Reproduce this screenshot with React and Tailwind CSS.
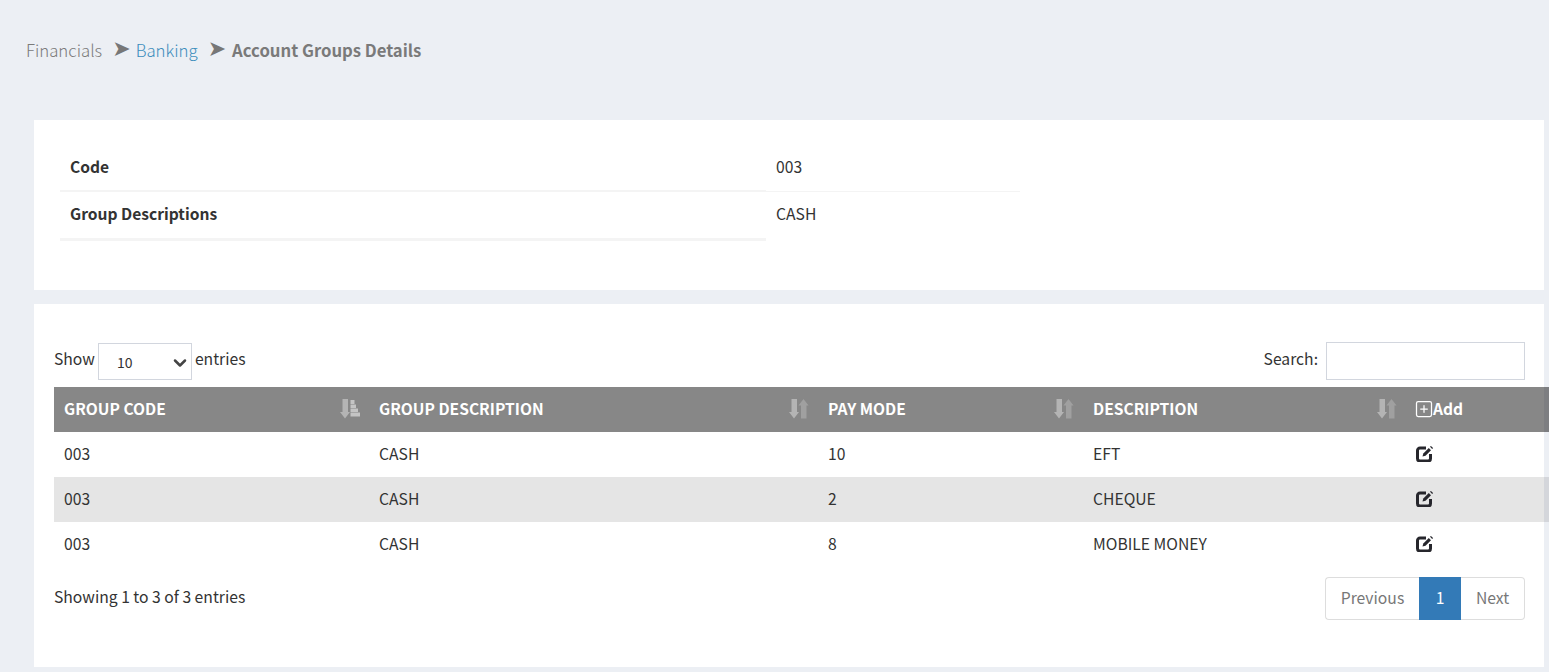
import React from 'react';
import { ChevronDown, SquarePlus } from 'lucide-react';

const rows = [
  { code: '003', desc: 'CASH', mode: '10', name: 'EFT' },
  { code: '003', desc: 'CASH', mode: '2', name: 'CHEQUE' },
  { code: '003', desc: 'CASH', mode: '8', name: 'MOBILE MONEY' },
];

// up/down arrows shown on the sortable headers
function SortIcon({ active }) {
  return (
    <svg width="20" height="20" viewBox="0 0 20 20" className="absolute right-[9px] top-[12px]">
      <path d="M2.500 0h5.500v13h2l-5 6.500-5-6.500h2.500z" fill="#b4b4b4" />
      {active ? (
        <path d="M10.500 1h4v4h-4zM10.500 5.500h5.500v3.500h-5.500zM10.500 9.500h7.500v3.500h-7.500zM10.500 13.500h9.500v4h-9.500z" fill="#c4c4c4" />
      ) : (
        <path d="M12 19.500h5.500v-13h2l-5-6.500-5 6.500h2.500z" fill="#a0a0a0" />
      )}
    </svg>
  );
}

// heavy edit glyph used on every row
function EditIcon() {
  return (
    <svg width="18" height="17" viewBox="0 0 18 17" className="-mt-[3px]">
      <path d="M10 3H4a2.500 2.500 0 0 0-2.500 2.500v8A2.500 2.500 0 0 0 4 16h8a2.500 2.500 0 0 0 2.500-2.500V9" fill="none" stroke="#26262c" strokeWidth="3" />
      <path d="M6.500 11.500l.8-3 5.500-5.500 2.200 2.200-5.500 5.500z" fill="#26262c" />
      <path d="M14 1.800l.9-.9 2.200 2.200-.9.900z" fill="#26262c" />
    </svg>
  );
}

function App() {
  return (
    <div className="h-[672px] overflow-hidden bg-[#eceff4] font-['Noto_Sans_CJK_SC',sans-serif] text-[15.7px] text-[#333333]">
      {/* Breadcrumb */}
      <div className="flex h-[120px] items-start pl-[26px] pt-[37px] text-[16.8px] leading-[26px] text-[#7a7a7a]">
        <span className="font-light">Financials</span>
        <span className="ml-[10px] mr-[5px] -mt-[1px] font-['DejaVu_Sans',sans-serif] text-[22px] text-[#777777]">➤</span>
        <span className="font-light text-[#3c8dbc]">Banking</span>
        <span className="ml-[10px] mr-[6px] -mt-[1px] font-['DejaVu_Sans',sans-serif] text-[22px] text-[#777777]">➤</span>
        <span className="text-[16.7px] font-bold">Account Groups Details</span>
      </div>

      {/* Summary card */}
      <div className="ml-[34px] mr-[5px] h-[170px] bg-white pl-[26px] pt-[24px]">
        <table className="w-[960px] table-fixed border-collapse">
          <tbody>
            <tr className="h-[47px]">
              <td className="w-[706px] border-b-2 border-[#f4f4f4] pl-[10px] text-[15.6px] font-bold">Code</td>
              <td className="border-b border-[#f4f4f4] pl-[10px]">003</td>
            </tr>
            <tr className="h-[48px]">
              <td className="border-b-[3px] border-[#f4f4f4] pb-[2px] pl-[10px] text-[15.6px] font-bold">Group Descriptions</td>
              <td className="pb-[2px] pl-[10px]">CASH</td>
            </tr>
          </tbody>
        </table>
      </div>

      {/* Details card */}
      <div className="ml-[34px] mr-[5px] mt-[14px] h-[363px] bg-white pl-[20px] pt-[38px]">
        <div className="flex h-[45px] items-start justify-between pr-[19px]">
          <div className="flex items-center gap-[3px]">
            <span className="pb-[4px]">Show</span>
            <div className="relative mt-[1px]">
              <select className="block h-[37px] w-[94px] appearance-none rounded-none border border-[#d2d6de] bg-white pl-[18px] pt-[2px] text-[14px] outline-none">
                <option>10</option>
              </select>
              <ChevronDown size={20} strokeWidth={3} className="absolute right-[2px] top-[10px] text-[#444444]" />
            </div>
            <span className="pb-[4px]">entries</span>
          </div>
          <div className="flex items-center gap-[8px]">
            <span className="pb-[4px]">Search:</span>
            <input className="h-[38px] w-[199px] border border-[#d2d6de] bg-white outline-none" />
          </div>
        </div>

        <table className="w-[1500px] table-fixed border-collapse text-left">
          <thead>
            <tr className="h-[45px] bg-black/47 text-[15.6px] font-bold text-white">
              <th className="relative w-[315px] pb-[2px] pl-[10px]">GROUP CODE<SortIcon active /></th>
              <th className="relative w-[449px] pb-[2px] pl-[10px]">GROUP DESCRIPTION<SortIcon /></th>
              <th className="relative w-[265px] pb-[2px] pl-[10px]">PAY MODE<SortIcon /></th>
              <th className="relative w-[323px] pb-[2px] pl-[10px]">DESCRIPTION<SortIcon /></th>
              <th className="pb-[2px] pl-[10px]">
                <span className="flex items-center gap-0">
                  <SquarePlus size={20} strokeWidth={1.5} className="-ml-[2px] mr-[-1px] mt-[1px]" />
                  Add
                </span>
              </th>
            </tr>
          </thead>
          <tbody>
            {rows.map((row, i) => (
              <tr key={row.name} className={i === 1 ? 'h-[45px] bg-black/10' : 'h-[45px]'}>
                <td className="pb-[2px] pl-[10px]">{row.code}</td>
                <td className="pb-[2px] pl-[10px]">{row.desc}</td>
                <td className="pb-[2px] pl-[10px]">{row.mode}</td>
                <td className="pb-[2px] pl-[10px]">{row.name}</td>
                <td className="pl-[10px]"><EditIcon /></td>
              </tr>
            ))}
          </tbody>
        </table>

        <div className="mt-[10px] flex items-start justify-between pr-[19px]">
          <span className="pt-[8px]">Showing 1 to 3 of 3 entries</span>
          <div className="flex h-[43px] items-center text-[#777777]">
            <span className="flex h-full w-[94px] items-center justify-center rounded-l-[4px] border border-r-0 border-[#dddddd] bg-white pb-[2px]">Previous</span>
            <span className="flex h-full w-[42px] items-center justify-center bg-[#337ab7] pb-[2px] text-white">1</span>
            <span className="flex h-full w-[64px] items-center justify-center rounded-r-[4px] border border-l-0 border-[#dddddd] bg-white pb-[2px]">Next</span>
          </div>
        </div>
      </div>
    </div>
  );
}

export default App;
